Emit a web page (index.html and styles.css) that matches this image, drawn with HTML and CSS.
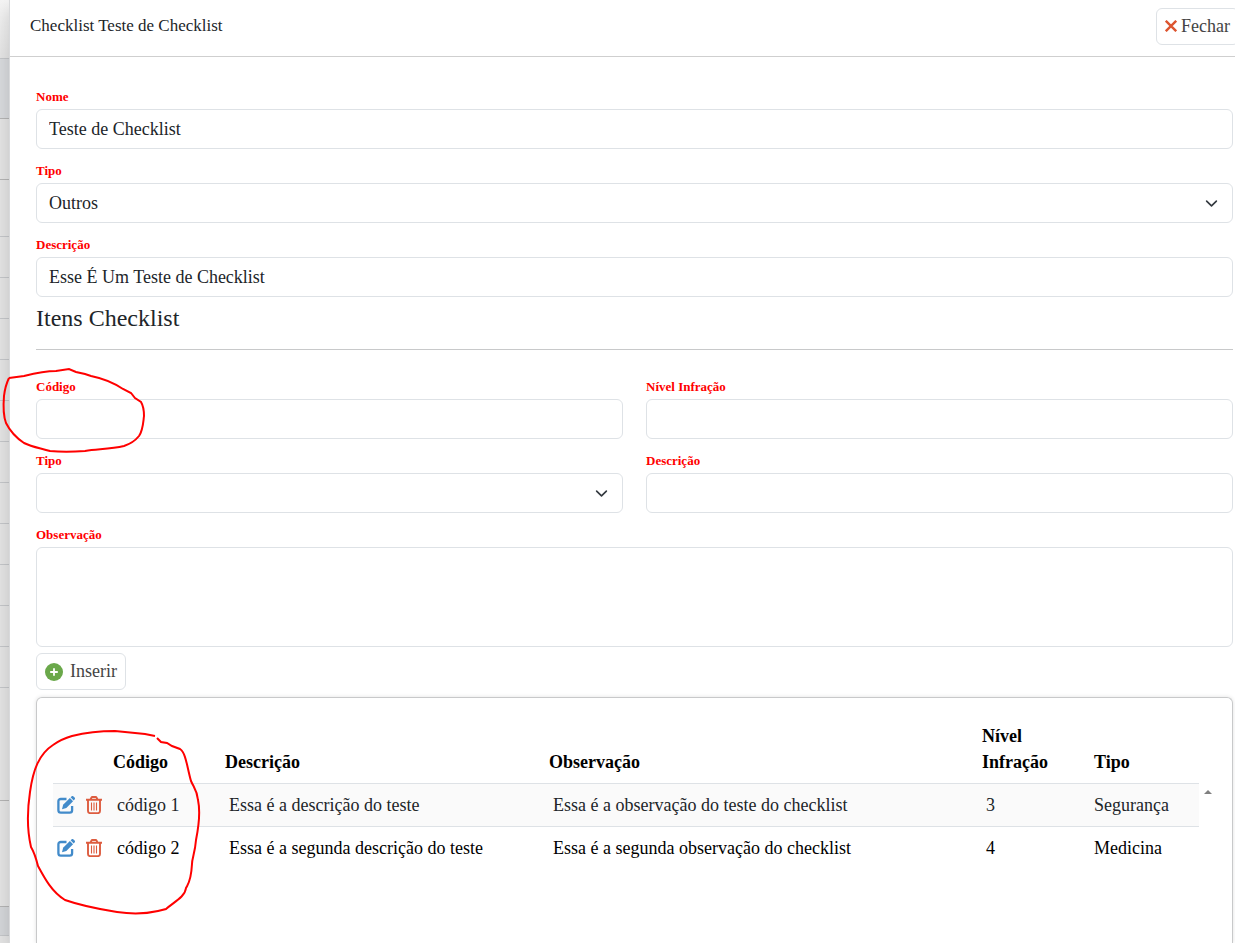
FILE: index.html
```html
<!DOCTYPE html>
<html lang="pt-BR">
<head>
    <meta charset="UTF-8">
    <meta name="viewport" content="width=device-width, initial-scale=1.0">
    <title>Checklist</title>
    <link rel="stylesheet" href="styles.css">
</head>
<body>
    <svg class="sprite" aria-hidden="true">
        <symbol id="edit" viewBox="0 0 18 18">
            <path d="M9.5 3H3.8C2.4 3 1.4 3.9 1.4 5.3v8.9c0 1.4 1 2.4 2.4 2.4h8.9c1.4 0 2.4-1 2.4-2.4V10" fill="none" stroke="#428bca" stroke-width="2.3"/>
            <path d="M5 13.2l1.1-4.4L12.9 2l3.2 3.2-6.8 6.9z" fill="#428bca"/>
            <path d="M13.6 1.3l.8-.8c.7-.7 1.5-.7 2.1-.1l1.1 1.1c.6.6.6 1.4-.1 2.1l-.8.8z" fill="#428bca"/>
        </symbol>
        <symbol id="trash" viewBox="0 0 16 18">
            <path d="M0 3.8h16M2 4v11c0 1.3.7 2.1 1.9 2.1h8.2c1.2 0 1.9-.8 1.9-2.1V4M4.4 3.6l1-1.9c.2-.4.5-.7.9-.7h3.4c.4 0 .7.3.9.7l1 1.9" fill="none" stroke="#dd5c3f" stroke-width="1.9"/>
            <path d="M5.5 6.4v8M8 6.4v8M10.5 6.4v8" fill="none" stroke="#dd5c3f" stroke-width="1.1"/>
        </symbol>
    </svg>

    <div class="page">
        <div class="backdrop">
            <div class="bar"></div>
            <div class="head"></div>
            <div class="filter"></div>
            <div class="title"></div>
            <div class="line"></div>
            <div class="line"></div>
            <div class="line"></div>
            <div class="line"></div>
            <div class="line"></div>
            <div class="line"></div>
            <div class="line"></div>
            <div class="line"></div>
            <div class="line"></div>
            <div class="line"></div>
            <div class="line"></div>
            <div class="block"></div>
            <div class="block-end"></div>
            <div class="foot"></div>
        </div>

        <main class="drawer">
            <header class="drawer-header">
                <span>Checklist Teste de Checklist</span>
                <button type="button" class="btn btn-close">
                    <svg width="12" height="12" viewBox="0 0 12 12"><path d="M.8 .8l10.4 10.4M11.2 .8L.8 11.2" stroke="#dd5530" stroke-width="2.4" fill="none"/></svg>
                    Fechar
                </button>
            </header>

            <form class="drawer-body">
                <div class="field">
                    <label for="nome">Nome</label>
                    <input type="text" id="nome" value="Teste de Checklist">
                </div>
                <div class="field">
                    <label for="tipo">Tipo</label>
                    <select id="tipo"><option>Outros</option></select>
                </div>
                <div class="field">
                    <label for="descricao">Descrição</label>
                    <input type="text" id="descricao" value="Esse É Um Teste de Checklist">
                </div>

                <h2>Itens Checklist</h2>

                <div class="row">
                    <div class="field">
                        <label for="itemCodigo">Código</label>
                        <input type="text" id="itemCodigo">
                    </div>
                    <div class="field">
                        <label for="itemNivel">Nível Infração</label>
                        <input type="text" id="itemNivel">
                    </div>
                    <div class="field">
                        <label for="itemTipo">Tipo</label>
                        <select id="itemTipo"><option></option></select>
                    </div>
                    <div class="field">
                        <label for="itemDescricao">Descrição</label>
                        <input type="text" id="itemDescricao">
                    </div>
                </div>
                <div class="field field-notes">
                    <label for="observacao">Observação</label>
                    <textarea id="observacao"></textarea>
                </div>

                <button type="button" class="btn btn-insert">
                    <svg width="18" height="18" viewBox="0 0 18 18"><circle cx="9" cy="9" r="9" fill="#6aa84a"/><path d="M9 5.2v7.6M5.2 9h7.6" stroke="#fff" stroke-width="1.8"/></svg>
                    Inserir
                </button>

                <div class="card">
                    <table>
                        <colgroup>
                            <col class="col-actions">
                            <col class="col-code">
                            <col class="col-desc">
                            <col>
                            <col class="col-level">
                            <col class="col-type">
                        </colgroup>
                        <thead>
                            <tr>
                                <th></th>
                                <th>Código</th>
                                <th>Descrição</th>
                                <th>Observação</th>
                                <th>Nível Infração</th>
                                <th>Tipo</th>
                            </tr>
                        </thead>
                        <tbody>
                            <tr>
                                <td>
                                    <div class="actions">
                                        <button type="button" aria-label="Editar"><svg width="18" height="18"><use href="#edit"/></svg></button>
                                        <button type="button" aria-label="Excluir"><svg width="16" height="18"><use href="#trash"/></svg></button>
                                    </div>
                                </td>
                                <td>código 1</td>
                                <td>Essa é a descrição do teste</td>
                                <td>Essa é a observação do teste do checklist</td>
                                <td>3</td>
                                <td>Segurança</td>
                            </tr>
                            <tr>
                                <td>
                                    <div class="actions">
                                        <button type="button" aria-label="Editar"><svg width="18" height="18"><use href="#edit"/></svg></button>
                                        <button type="button" aria-label="Excluir"><svg width="16" height="18"><use href="#trash"/></svg></button>
                                    </div>
                                </td>
                                <td>código 2</td>
                                <td>Essa é a segunda descrição do teste</td>
                                <td>Essa é a segunda observação do checklist</td>
                                <td>4</td>
                                <td>Medicina</td>
                            </tr>
                        </tbody>
                    </table>
                    <div class="scroll">
                        <svg width="8" height="4" viewBox="0 0 8 4"><path d="M0 4L4 0L8 4z" fill="#808080"/></svg>
                    </div>
                </div>
            </form>
        </main>

        <!-- hand-drawn marks -->
        <svg class="marks" width="210" height="920" viewBox="0 0 210 920" aria-hidden="true">
            <path d="M9 378L24 376C36 373 44 371 56 371L69 369L76 372L85 374L91 376C106 379 114 383 123 389L131 393L135 398L141 402C144 407 144 411 144 416C143 424 143 430 139 436C135 441 130 444 124 446C111 449 100 449 85 451C72 452 60 452 50 451C40 448 32 447 24 443C18 439 10 431 6 423C3 415 3 408 4 396C5 388 7 382 9 378"/>
            <path d="M157 738L161 742L167 743L172 746L180 749C186 753 187 767 191 781C194 788 197 790 198 800C201 814 198 830 196 840C195 853 192 858 192 864C191 882 188 884 186 888C185 897 174 902 166 909L158 911C145 914 130 914 117 912C98 909 82 906 65 900C52 892 45 879 38 866C36 858 34 852 31 847C27 830 27 812 30 792C33 770 39 754 53 745C60 740 65 738 72 736C88 732 100 731 115 731L145 734L155 736"/>
        </svg>
    </div>
</body>
</html>
```
FILE: styles.css
```css
* {
    box-sizing: border-box;
}
body {
    margin: 0;
    font-family: "Liberation Serif", "Times New Roman", serif;
    font-size: 17px;
    color: #212529;
    background-color: white;
}
.sprite {
    display: none;
}
.page {
    position: relative;
    display: flex;
    height: 100vh;
    overflow: hidden;
}

/* page behind the drawer */
.backdrop {
    flex: 0 0 9px;
    background-color: #e4e4e4;
}
.backdrop div {
    border-bottom: 1px solid #c4c6c9;
}
.backdrop .bar {
    height: 59px;
    background: linear-gradient(#f4f4f4, #e4e4e4);
}
.backdrop .head {
    height: 60px;
    background-color: #d8dadd;
    border-color: #b4b4b4;
}
.backdrop .filter {
    height: 61px;
    border-color: #b4b4b4;
}
.backdrop .title {
    height: 57px;
}
.backdrop .line {
    height: 41px;
}
.backdrop .block {
    height: 113px;
    border-color: #b4b4b4;
}
.backdrop .block-end {
    height: 106px;
    border-color: #b4b4b4;
}
.backdrop .foot {
    height: 29px;
    background-color: #d4d6d9;
}

.drawer {
    flex: 1;
    min-width: 0;
    display: flex;
    flex-direction: column;
    background-color: white;
    border-left: 1px solid #d8d9db;
    box-shadow: 0 8px 16px rgba(0,0,0,0.15);
}
.drawer-header {
    display: flex;
    flex-shrink: 0;
    align-items: center;
    justify-content: space-between;
    height: 57px;
    padding: 0 0 4px 20px;
    border-bottom: 1px solid #cfcfcf;
}
.drawer-body {
    flex: 1;
    min-height: 0;
    display: flex;
    flex-direction: column;
    padding: 28px 2px 0 26px;
}
.field {
    margin-bottom: 10px;
}
.field-notes {
    margin-bottom: 6px;
}
label {
    display: block;
    font-size: 13px;
    line-height: 24px;
    font-weight: bold;
    color: red;
}
input, select, textarea {
    display: block;
    width: 100%;
    height: 40px;
    padding: 0 12px;
    border: 1px solid #dee2e6;
    border-radius: 6px;
    font-family: inherit;
    font-size: 18px;
    color: #212529;
    background-color: white;
}
select {
    appearance: none;
    background-image: url("data:image/svg+xml,%3Csvg xmlns='http://www.w3.org/2000/svg' viewBox='0 0 16 16'%3E%3Cpath fill='none' stroke='%23343a40' stroke-linecap='round' stroke-linejoin='round' stroke-width='2' d='m2 5 6 6 6-6'/%3E%3C/svg%3E");
    background-repeat: no-repeat;
    background-position: right 14px center;
    background-size: 13px 13px;
}
textarea {
    height: 100px;
    resize: none;
}
h2 {
    margin: 0 0 25px;
    height: 43px;
    font-size: 24px;
    line-height: 22px;
    font-weight: normal;
    border-bottom: 1px solid #c8c9ca;
}
.row {
    display: grid;
    grid-template-columns: 1fr 1fr;
    column-gap: 23px;
}
.btn {
    display: flex;
    align-items: center;
    height: 37px;
    padding: 0 8px;
    border: 1px solid #dee2e6;
    border-radius: 6px;
    background-color: white;
    font-family: inherit;
    font-size: 18px;
    color: #444;
    cursor: pointer;
}
/* runs past the edge of the drawer */
.btn-close {
    gap: 4px;
    margin-right: -4px;
}
.btn-insert {
    flex-shrink: 0;
    align-self: flex-start;
    gap: 7px;
    margin-bottom: 7px;
}
.card {
    flex: 1;
    display: flex;
    align-items: flex-start;
    padding: 16px 16px 0;
    border: 1px solid #c8c9ca;
    border-bottom: none;
    border-radius: 6px 6px 0 0;
    box-shadow: 0 0 4px rgba(0,0,0,0.12);
}
table {
    flex: 1;
    table-layout: fixed;
    border-collapse: collapse;
    font-size: 18px;
    line-height: 26px;
    color: black;
}
.col-actions {
    width: 60px;
}
.col-code, .col-level {
    width: 112px;
}
.col-desc {
    width: 324px;
}
.col-type {
    width: 105px;
}
th {
    height: 69px;
    padding: 8px 40px 8px 0;
    text-align: left;
    vertical-align: bottom;
    border-bottom: 1px solid #dee2e6;
}
td {
    height: 43px;
    padding: 0 0 0 4px;
}
td:last-child {
    padding-left: 0;
}
tbody tr:first-child {
    background-color: #fafafa;
    color: #212529;
    border-bottom: 1px solid #dee2e6;
}
.actions {
    display: flex;
    gap: 11px;
}
.actions button {
    display: flex;
    padding: 0;
    border: none;
    background: none;
    cursor: pointer;
}
.scroll {
    flex: 0 0 17px;
    display: flex;
    justify-content: center;
    padding-top: 76px;
}
.marks {
    position: absolute;
    top: 0;
    left: 0;
    fill: none;
    stroke: red;
    stroke-width: 2;
    pointer-events: none;
}
```
